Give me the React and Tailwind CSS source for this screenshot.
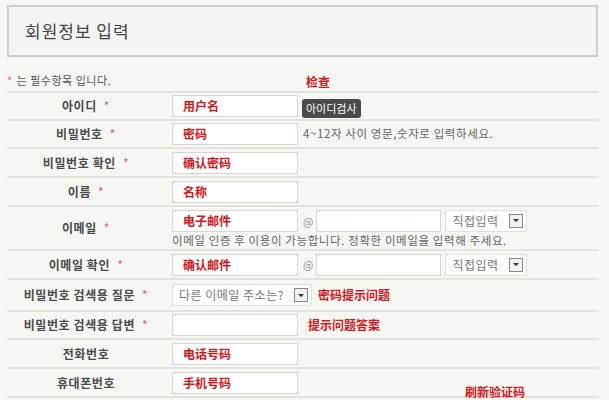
import React from 'react';

const KR = { fontFamily: '"Noto Sans CJK KR", "Noto Sans", sans-serif' };
const SC = { fontFamily: '"Noto Sans CJK SC", "Noto Sans CJK KR", sans-serif' };

function Star() {
  return <span className="text-[#e35d80] ml-[7px] font-normal">*</span>;
}

function Field({ text, w = 'w-[126px]' }) {
  return (
    <div className={`${w} h-[22px] bg-white border border-[#d6d6d2] flex items-center pl-[10px]`}>
      {text && (
        <span style={SC} className="text-[#d8141a] font-bold text-[12px] leading-none">{text}</span>
      )}
    </div>
  );
}

function Select({ label, w }) {
  return (
    <div className={`${w} h-[22px] bg-white border border-[#e0e0dc] flex items-center justify-between pl-[6px] pr-[3px]`}>
      <span className="text-[#777] text-[12px] tracking-[0.5px]">{label}</span>
      <span className="w-[14px] h-[14px] border border-[#888] bg-[#f2f2f2] flex items-center justify-center">
        <span className="w-0 h-0 border-l-[3px] border-r-[3px] border-t-[3px] border-l-transparent border-r-transparent border-t-[#333]" />
      </span>
    </div>
  );
}

function Row({ label, star = true, h, children }) {
  return (
    <div className={`flex border-b-2 border-[#e3e3de] ${h}`}>
      <div className="w-[158px] shrink-0 flex items-center justify-center text-[12px] font-bold text-[#4a4a4a] tracking-[0.6px]">
        {label}
        {star && <Star />}
      </div>
      <div className="flex-1 pl-[7px] flex items-center">{children}</div>
    </div>
  );
}

function Email({ text }) {
  return (
    <div className="flex items-center">
      <Field text={text} />
      <span className="text-[#999] text-[11px] ml-[5px] mr-[3px]">@</span>
      <div className="w-[125px] h-[22px] bg-white border border-[#d6d6d2]" />
      <div className="ml-[4px]">
        <Select label="직접입력" w="w-[82px]" />
      </div>
    </div>
  );
}

export default function App() {
  return (
    <div style={KR} className="w-[609px] h-[400px] bg-[#f7f7f3] overflow-hidden px-[7px] pt-[5px] text-[#444]">
      <div className="w-[591px] h-[52px] border-2 border-[#cfcfcb] bg-[#f4f4f2] flex items-center pl-[16px]">
        <h1 className="text-[17px] text-[#444] font-normal tracking-[1px]">회원정보 입력</h1>
      </div>

      <div className="h-[34px] flex items-end pb-[3px] text-[11px] text-[#555] tracking-[0.5px]">
        <span className="text-[#e35d80] mr-[4px]">*</span>는 필수항목 입니다.
      </div>

      <div className="w-[591px] border-t-2 border-[#e3e3de]">
        <Row label="아이디" h="h-[28px]">
          <Field text="用户名" />
          <div className="relative ml-[4px]">
            <span style={SC} className="absolute left-[4px] -top-[21px] text-[#d8141a] font-bold text-[12px]">检查</span>
            <button className="h-[19px] px-[4px] rounded-[3px] bg-[#4a4a4a] text-white text-[11px] leading-none">아이디검사</button>
          </div>
        </Row>
        <Row label="비밀번호" h="h-[28px]">
          <Field text="密码" />
          <span className="ml-[5px] text-[11.5px] text-[#666] tracking-[0.6px]">4~12자 사이 영문,숫자로 입력하세요.</span>
        </Row>
        <Row label="비밀번호 확인" h="h-[29px]">
          <Field text="确认密码" />
        </Row>
        <Row label="이름" h="h-[29px]">
          <Field text="名称" />
        </Row>
        <Row label="이메일" h="h-[44px]">
          <div className="flex flex-col">
            <Email text="电子邮件" />
            <span className="text-[11.5px] text-[#666] mt-[3px] leading-none tracking-[0.6px]">이메일 인증 후 이용이 가능합니다. 정확한 이메일을 입력해 주세요.</span>
          </div>
        </Row>
        <Row label="이메일 확인" h="h-[29px]">
          <Email text="确认邮件" />
        </Row>
        <Row label="비밀번호 검색용 질문" h="h-[32px]">
          <Select label="다른 이메일 주소는?" w="w-[140px]" />
          <span style={SC} className="ml-[6px] text-[#d8141a] font-bold text-[12px]">密码提示问题</span>
        </Row>
        <Row label="비밀번호 검색용 답변" h="h-[28px]">
          <Field />
          <span style={SC} className="ml-[10px] text-[#d8141a] font-bold text-[12px]">提示问题答案</span>
        </Row>
        <Row label="전화번호" star={false} h="h-[29px]">
          <Field text="电话号码" />
        </Row>
        <Row label="휴대폰번호" star={false} h="h-[29px]">
          <Field text="手机号码" />
        </Row>
        <div className="h-[20px] relative">
          <span style={SC} className="absolute left-[458px] -top-[15px] text-[#d8141a] font-bold text-[12px]">刷新验证码</span>
        </div>
      </div>
    </div>
  );
}
